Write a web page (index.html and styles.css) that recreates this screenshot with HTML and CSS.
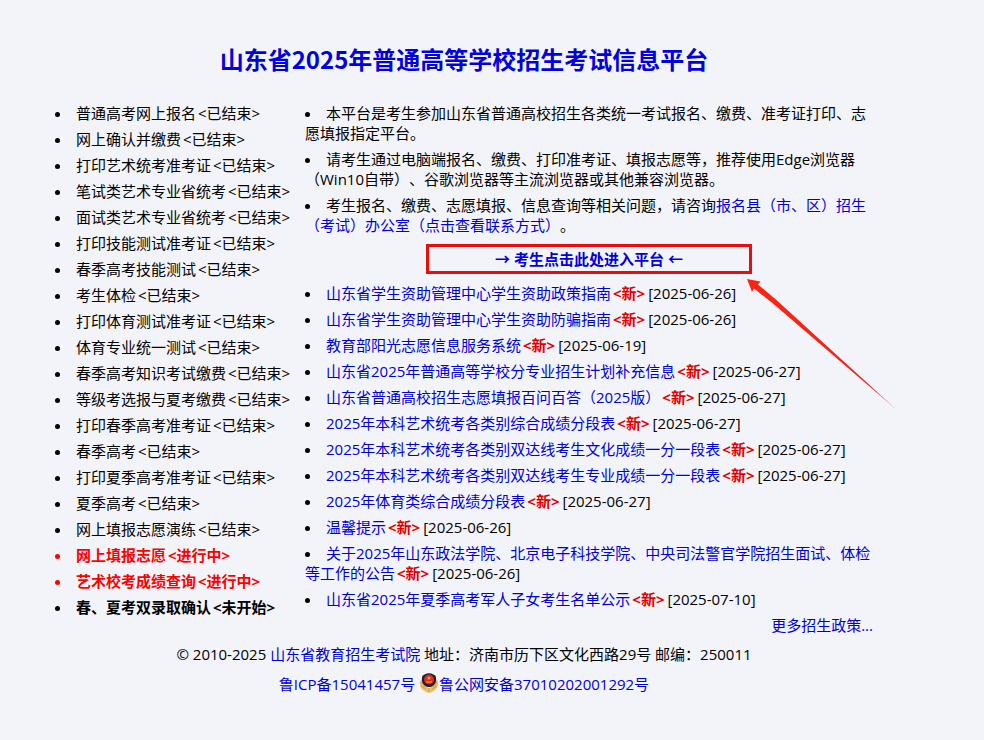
FILE: index.html
```html
<!DOCTYPE html>
<html lang="zh-CN">
<head>
<meta charset="utf-8">
<title>山东省2025年普通高等学校招生考试信息平台</title>
<link rel="stylesheet" href="styles.css">
</head>
<body>
<div class="page">
  <h1 class="title">山东省2025年普通高等学校招生考试信息平台</h1>
  <div class="columns">
    <ul class="list schedule">
      <li>普通高考网上报名<span class="status">&lt;已结束&gt;</span></li>
      <li>网上确认并缴费<span class="status">&lt;已结束&gt;</span></li>
      <li>打印艺术统考准考证<span class="status">&lt;已结束&gt;</span></li>
      <li>笔试类艺术专业省统考<span class="status">&lt;已结束&gt;</span></li>
      <li>面试类艺术专业省统考<span class="status">&lt;已结束&gt;</span></li>
      <li>打印技能测试准考证<span class="status">&lt;已结束&gt;</span></li>
      <li>春季高考技能测试<span class="status">&lt;已结束&gt;</span></li>
      <li>考生体检<span class="status">&lt;已结束&gt;</span></li>
      <li>打印体育测试准考证<span class="status">&lt;已结束&gt;</span></li>
      <li>体育专业统一测试<span class="status">&lt;已结束&gt;</span></li>
      <li>春季高考知识考试缴费<span class="status">&lt;已结束&gt;</span></li>
      <li>等级考选报与夏考缴费<span class="status">&lt;已结束&gt;</span></li>
      <li>打印春季高考准考证<span class="status">&lt;已结束&gt;</span></li>
      <li>春季高考<span class="status">&lt;已结束&gt;</span></li>
      <li>打印夏季高考准考证<span class="status">&lt;已结束&gt;</span></li>
      <li>夏季高考<span class="status">&lt;已结束&gt;</span></li>
      <li>网上填报志愿演练<span class="status">&lt;已结束&gt;</span></li>
      <li class="active">网上填报志愿<span class="status">&lt;进行中&gt;</span></li>
      <li class="active">艺术校考成绩查询<span class="status">&lt;进行中&gt;</span></li>
      <li class="upcoming">春、夏考双录取确认<span class="status">&lt;未开始&gt;</span></li>
    </ul>
    <main>
      <ul class="list">
        <li>本平台是考生参加山东省普通高校招生各类统一考试报名、缴费、准考证打印、志愿填报指定平台。</li>
        <li>请考生通过电脑端报名、缴费、打印准考证、填报志愿等，推荐使用Edge浏览器（Win10自带）、谷歌浏览器等主流浏览器或其他兼容浏览器。</li>
        <li>考生报名、缴费、志愿填报、信息查询等相关问题，请咨询<a href="#">报名县（市、区）招生（考试）办公室（点击查看联系方式）</a>。</li>
      </ul>
      <div class="entry">
        <a href="#">→ 考生点击此处进入平台 ←</a>
        <svg class="pointer" width="152" height="133" viewBox="0 0 152 133" aria-hidden="true">
          <defs>
            <linearGradient id="fade" x1="0" y1="0" x2="1" y2="1">
              <stop offset="0" stop-color="#ff2312"/>
              <stop offset="0.8" stop-color="#e8281c"/>
              <stop offset="1" stop-color="#f0a0a0"/>
            </linearGradient>
          </defs>
          <path fill="url(#fade)" d="M0 0 13.500 2.500 11 5.500 30 21.500 151 132 26.500 25 7 9.500 5 13Z"/>
        </svg>
      </div>
      <ul class="list">
        <li><a href="#">山东省学生资助管理中心学生资助政策指南</a><span class="new">&lt;新&gt;</span>[2025-06-26]</li>
        <li><a href="#">山东省学生资助管理中心学生资助防骗指南</a><span class="new">&lt;新&gt;</span>[2025-06-26]</li>
        <li><a href="#">教育部阳光志愿信息服务系统</a><span class="new">&lt;新&gt;</span>[2025-06-19]</li>
        <li><a href="#">山东省2025年普通高等学校分专业招生计划补充信息</a><span class="new">&lt;新&gt;</span>[2025-06-27]</li>
        <li><a href="#">山东省普通高校招生志愿填报百问百答（2025版）</a><span class="new">&lt;新&gt;</span>[2025-06-27]</li>
        <li><a href="#">2025年本科艺术统考各类别综合成绩分段表</a><span class="new">&lt;新&gt;</span>[2025-06-27]</li>
        <li><a href="#">2025年本科艺术统考各类别双达线考生文化成绩一分一段表</a><span class="new">&lt;新&gt;</span>[2025-06-27]</li>
        <li><a href="#">2025年本科艺术统考各类别双达线考生专业成绩一分一段表</a><span class="new">&lt;新&gt;</span>[2025-06-27]</li>
        <li><a href="#">2025年体育类综合成绩分段表</a><span class="new">&lt;新&gt;</span>[2025-06-27]</li>
        <li><a href="#">温馨提示</a><span class="new">&lt;新&gt;</span>[2025-06-26]</li>
        <li><a href="#">关于2025年山东政法学院、北京电子科技学院、中央司法警官学院招生面试、体检等工作的公告</a><span class="new">&lt;新&gt;</span>[2025-06-26]</li>
        <li><a href="#">山东省2025年夏季高考军人子女考生名单公示</a><span class="new">&lt;新&gt;</span>[2025-07-10]</li>
      </ul>
      <p class="more"><a href="#">更多招生政策...</a></p>
    </main>
  </div>
  <footer class="footer">
    <p>© 2010-2025 <a href="#">山东省教育招生考试院</a> 地址：济南市历下区文化西路29号 邮编：250011</p>
    <p><a href="#">鲁ICP备15041457号</a> <a href="#"><svg class="badge" width="20" height="20" viewBox="0 0 20 20" aria-hidden="true">
      <path fill="#eebd68" d="M3 6C0 8 0 14 4 17L7 19 10 20 13 19 16 17C20 14 20 8 17 6L14 13 10 15 6 13Z"/>
      <path fill="none" stroke="#c98a3a" stroke-width=".7" d="M2 9 6 14M2 13 7 16M18 9 14 14M18 13 13 16M10 15V19"/>
      <path fill="#1f1b38" d="M3 4C6 -1 14 -1 17 4V8C16 12 13 14 10 14 7 14 4 12 3 8Z"/>
      <circle cx="10" cy="6.500" r="5" fill="#dc2a1c"/>
      <path fill="#f2a33a" d="M10 3 10.700 4.500H12.500L11 5.500 11.500 7 10 6 8.500 7 9 5.500 7.500 4.500H9.300ZM7 8.500H13V9.500H7Z"/>
    </svg>鲁公网安备37010202001292号</a></p>
  </footer>
</div>
</body>
</html>
```
FILE: styles.css
```css
* {
  box-sizing: border-box;
}

body {
  margin: 0;
  background: #f3f4fa;
  color: #000;
  font: 390 15px/20px "Open Sans", "Noto Sans CJK SC", sans-serif;
  text-spacing-trim: space-all;
}

ul,
p,
h1 {
  margin: 0;
  padding: 0;
}

a {
  color: #0000d8;
  text-decoration: none;
}

.page {
  padding: 43px 111px 44px 55px;
}

.title {
  margin-bottom: 28px;
  color: #0000e0;
  font: bold 24px/32px "Noto Sans CJK SC", sans-serif;
  text-align: center;
}

.columns {
  display: grid;
  grid-template-columns: 240px 1fr;
  gap: 10px;
}

.list {
  display: grid;
  gap: 6px;
  list-style: disc inside;
}

.schedule {
  align-content: start;
  white-space: nowrap;
}

.status {
  margin-left: 2px;
}

.active {
  color: #f00;
  font-weight: bold;
}

.upcoming {
  font-weight: bold;
}

.entry {
  position: relative;
  width: 326px;
  margin: 9px auto;
  padding: 2px;
  border: 3px solid #e80c0e;
  font-weight: bold;
  text-align: center;
}

.pointer {
  position: absolute;
  top: calc(100% + 8px);
  left: calc(100% - 2px);
}

.new {
  padding: 0 3px 0 2px;
  color: #e00000;
  font-weight: bold;
}

.more {
  margin-top: 6px;
  text-align: right;
}

.footer {
  display: grid;
  gap: 10px;
  margin-top: 9px;
  text-align: center;
}

.badge {
  margin: -4px 0;
  vertical-align: 1px;
}
```
